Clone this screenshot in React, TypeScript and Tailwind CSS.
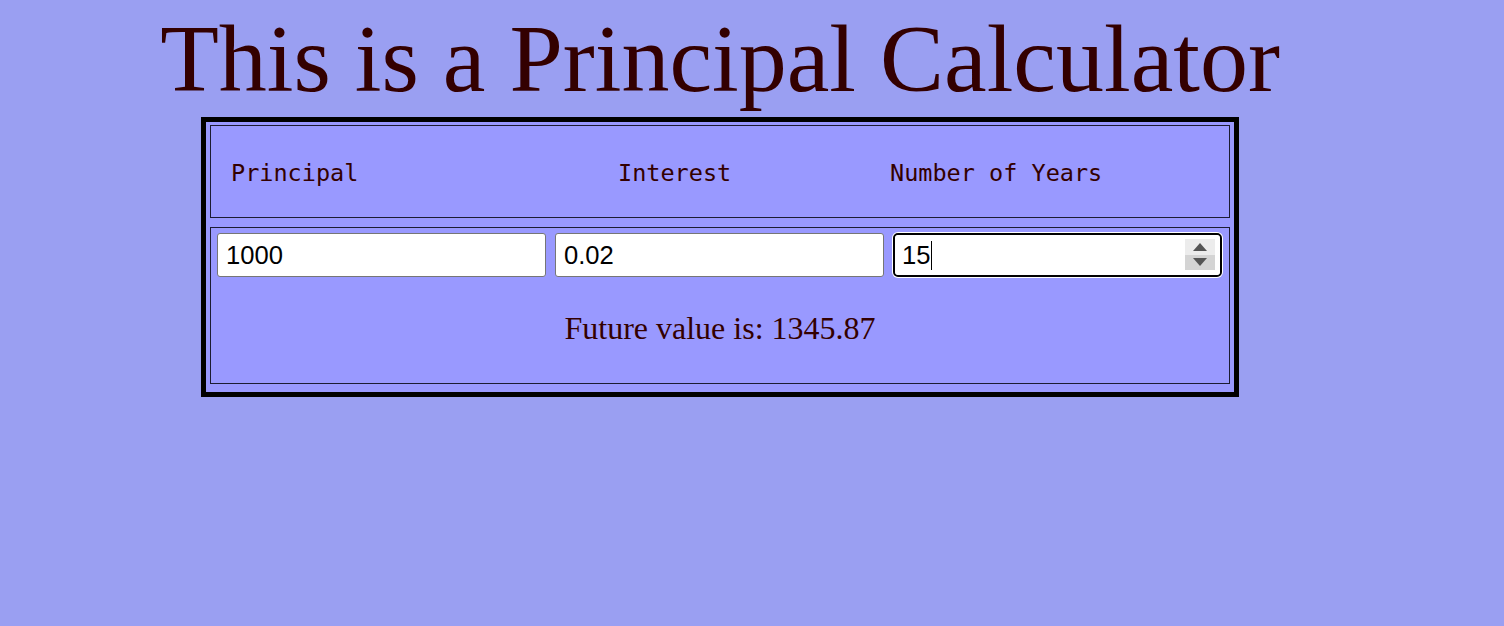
export default function App() {
  return (
    <div className="min-h-[626px] w-full bg-[#9a9ff2] text-[#330000]">
      <div className="ml-[201px] w-[1038px]">
        <h1 className="flex h-[117px] justify-center whitespace-nowrap pt-[4px] font-['Liberation_Serif',serif] text-[96px] leading-[110px] font-normal">
          This is a Principal Calculator
        </h1>

        <div className="border-[5px] border-black bg-[#9999ff] px-[4px] pt-[3px] pb-[8px]">
          {/* header labels */}
          <div className="flex h-[93px] items-center border border-[#1c1c33] pl-[20px] pt-[4px] font-['DejaVu_Sans_Mono',monospace] text-[23.5px]">
            <span className="w-[387px]">Principal</span>
            <span className="w-[272px]">Interest</span>
            <span>Number of Years</span>
          </div>

          {/* inputs + result */}
          <div className="mt-[9px] h-[157px] border border-[#1c1c33] pt-[5px] pl-[6px]">
            <div className="flex gap-[9px]">
              <input
                type="text"
                defaultValue="1000"
                className="h-[44px] w-[329px] rounded-[3px] border border-[#767676] bg-white pl-[8px] font-['Liberation_Sans',sans-serif] text-[25.6px] text-black outline-none"
              />
              <input
                type="text"
                defaultValue="0.02"
                className="h-[44px] w-[329px] rounded-[3px] border border-[#767676] bg-white pl-[8px] font-['Liberation_Sans',sans-serif] text-[25.6px] text-black outline-none"
              />
              <div className="relative h-[44px] w-[329px] rounded-[5px] border-2 border-black bg-white shadow-[0_0_0_1px_#ffffff]">
                <input
                  type="text"
                  defaultValue="15"
                  className="h-full w-full rounded-[4px] bg-white pl-[7px] font-['Liberation_Sans',sans-serif] text-[25.6px] text-black outline-none"
                />
                {/* caret */}
                <span className="absolute left-[36px] top-[6px] h-[29px] w-[1px] bg-black" />
                {/* spinner */}
                <div className="absolute right-[5px] top-[4px] flex h-[31px] w-[30px] flex-col">
                  <div className="flex flex-1 items-center justify-center bg-[#ececec]">
                    <svg width="14" height="8" viewBox="0 0 14 8">
                      <path d="M7 0 L14 8 L0 8 Z" fill="#555555" />
                    </svg>
                  </div>
                  <div className="flex flex-1 items-center justify-center bg-[#d4d4d4]">
                    <svg width="14" height="8" viewBox="0 0 14 8">
                      <path d="M0 0 L14 0 L7 8 Z" fill="#555555" />
                    </svg>
                  </div>
                </div>
              </div>
            </div>

            <p className="mt-[27px] pr-[6px] text-center font-['Liberation_Serif',serif] text-[32px]">
              Future value is: 1345.87
            </p>
          </div>
        </div>
      </div>
    </div>
  );
}
